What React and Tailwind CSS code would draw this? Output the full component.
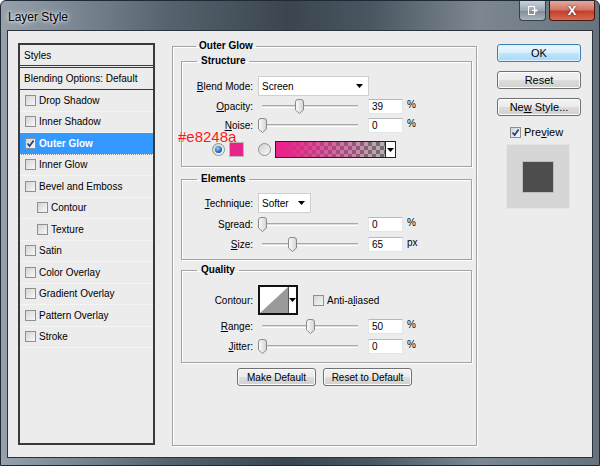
import React from "react";

const effects = [
  { name: "Drop Shadow" },
  { name: "Inner Shadow" },
  { name: "Outer Glow", on: true },
  { name: "Inner Glow" },
  { name: "Bevel and Emboss" },
  { name: "Contour", sub: true },
  { name: "Texture", sub: true },
  { name: "Satin" },
  { name: "Color Overlay" },
  { name: "Gradient Overlay" },
  { name: "Pattern Overlay" },
  { name: "Stroke" },
];

function Check({ checked }) {
  return (
    <span className="w-[11px] h-[11px] shrink-0 border border-[#8e8f8f] bg-[linear-gradient(135deg,#d4d4d4,#f8f8f8)] flex items-center justify-center">
      {checked && (
        <svg width="9" height="9" viewBox="0 0 9 9">
          <path d="M1.5 4.5 L3.6 7 L7.6 1.5" fill="none" stroke="#23448e" strokeWidth="1.8" />
        </svg>
      )}
    </span>
  );
}

function Radio({ on }) {
  return (
    <span className="w-[13px] h-[13px] shrink-0 rounded-full border border-[#8e8f8f] bg-[linear-gradient(135deg,#d0d0d0,#fafafa)] flex items-center justify-center">
      {on && (
        <span className="w-[7px] h-[7px] rounded-full bg-[radial-gradient(circle_at_40%_35%,#8fd4ff,#1a6bb8_60%,#0b3c70)]" />
      )}
    </span>
  );
}

function Arrow() {
  return (
    <svg width="7" height="4" viewBox="0 0 7 4">
      <path d="M0 0 H7 L3.5 4 Z" fill="#000" />
    </svg>
  );
}

function Select({ value, width }) {
  return (
    <div className={`h-[20px] ml-[5px] bg-white border border-[#cfcfcf] flex items-center pl-[3px] pr-[5px] justify-between ${width}`}>
      <span>{value}</span>
      <Arrow />
    </div>
  );
}

function Slider({ at }) {
  return (
    <div className="relative ml-[9px] w-[96px] h-[14px] flex items-center">
      <div className="w-full h-[3px] border-t border-[#a9a9a9] border-b border-b-white bg-[#dcdcdc]" />
      <svg
        className="absolute top-0"
        style={{ left: at - 4.5 }}
        width="9"
        height="15"
        viewBox="0 0 9 15"
      >
        <defs>
          <linearGradient id="th" x1="0" x2="1">
            <stop offset="0" stopColor="#fdfdfd" />
            <stop offset="1" stopColor="#d2d2d2" />
          </linearGradient>
        </defs>
        <path d="M0.5 3 Q0.5 0.5 3 0.5 H6 Q8.5 0.5 8.5 3 V11 L4.5 14.5 L0.5 11 Z" fill="url(#th)" stroke="#8a8a8a" />
      </svg>
    </div>
  );
}

function Field({ value }) {
  return (
    <div className="ml-[10px] w-[35px] h-[15px] bg-white border border-[#e2e6ea] border-t-[#b5b9bd] pl-[3px] leading-[13px]">
      {value}
    </div>
  );
}

function Label({ children, w = "w-[71px]" }) {
  return <span className={`${w} text-right shrink-0`}>{children}</span>;
}

function SliderRow({ label, at, value, unit, mt }) {
  return (
    <div className={`flex items-center h-[14px] ${mt}`}>
      <Label>{label}</Label>
      <Slider at={at} />
      <Field value={value} />
      <span className="ml-[4px] -mt-[3px]">{unit}</span>
    </div>
  );
}

function Btn({ children, w, primary }) {
  return (
    <div
      className={`h-[18px] rounded-[3px] flex items-center justify-center ${w} ${
        primary
          ? "border border-[#3c7fb1] bg-[linear-gradient(#eaf6fd_0%,#d9f0fc_50%,#bee6fd_51%,#a7d9f5_100%)] shadow-[inset_0_0_0_1px_#dff2fd]"
          : "border border-[#707070] bg-[linear-gradient(#f2f2f2_0%,#ebebeb_50%,#dddddd_51%,#cfcfcf_100%)] shadow-[inset_0_0_0_1px_#fcfcfc]"
      }`}
    >
      {children}
    </div>
  );
}

export default function App() {
  return (
    <div className="relative w-[600px] h-[466px] flex flex-col overflow-hidden rounded-t-[6px] border border-[#1f2a34] bg-[linear-gradient(90deg,#96a1ab_0%,#7b8792_12%,#56626d_28%,#3a4550_48%,#4a5661_62%,#7c8791_80%,#66727d_100%)] font-['Liberation_Sans',Arial,sans-serif] text-[10px] text-black">
      <div className="h-[29px] flex items-start shrink-0">
        <span className="mt-[9px] ml-[7px] text-[12px] leading-[14px] [text-shadow:0_0_6px_#fff,0_0_3px_#fff]">
          Layer Style
        </span>
        <div className="ml-auto flex gap-[3px] mr-[4px]">
          <div className="w-[27px] h-[20px] rounded-b-[4px] border border-t-0 border-[#34404b] bg-[linear-gradient(#c9d2da,#9aa6b1_50%,#7f8b96_51%,#a9b4bd)] flex items-center justify-center">
            <svg width="11" height="11" viewBox="0 0 11 11">
              <rect x="1.5" y="1.5" width="6" height="8" fill="none" stroke="#fff" />
              <path d="M5 5.5 H10 M8 3.5 L10 5.5 L8 7.5" fill="none" stroke="#fff" />
            </svg>
          </div>
          <div className="w-[46px] h-[20px] rounded-b-[4px] border border-t-0 border-[#4d1710] bg-[linear-gradient(#e6a89c,#d27866_45%,#c2402c_55%,#d76c52)] flex items-center justify-center">
            <span className="text-white font-bold text-[13px] leading-none [text-shadow:0_0_2px_#3a0a05]">X</span>
          </div>
        </div>
      </div>

      <div className="mx-[6px] mb-[7px] flex-1 border border-[#2a323a] bg-[#ececec] flex pl-[10px] pt-[9px]">
        <div className="mt-[3px] w-[137px] h-[402px] border-2 border-[#3a3a3a] flex flex-col">
          <div className="h-[23px] shrink-0 border-b-[3px] border-double border-[#3a3a3a] flex items-center pl-[4px]">
            Styles
          </div>
          <div className="h-[22px] shrink-0 border-b border-[#3a3a3a] flex items-center pl-[4px]">
            Blending Options: Default
          </div>
          {effects.map((e) => (
            <div
              key={e.name}
              className={`h-[21.5px] shrink-0 flex items-center border-b border-dotted border-[#fdfdfd] ${
                e.sub ? "pl-[17px]" : "pl-[5px]"
              } ${e.on ? "bg-[#3399ff] text-white font-bold" : ""}`}
            >
              <Check checked={e.on} />
              <span className="ml-[3px]">{e.name}</span>
            </div>
          ))}
        </div>

        <fieldset className="ml-[17px] w-[305px] h-[406px] border border-[#a3a3a3] pl-[8px] shadow-[1px_1px_0_#fff,inset_1px_1px_0_#fff]">
          <legend className="ml-[15px] px-[3px] font-bold leading-[12px]">Outer Glow</legend>

          <fieldset className="mt-[3px] w-[291px] border border-[#a3a3a3] pb-[8px] shadow-[1px_1px_0_#fff,inset_1px_1px_0_#fff]">
            <legend className="ml-[15px] px-[4px] font-bold leading-[12px]">Structure</legend>
            <div className="flex items-center h-[20px] mt-[9px]">
              <Label>
                <u>B</u>lend Mode:
              </Label>
              <Select value="Screen" width="w-[111px]" />
            </div>
            <SliderRow label={<><u>O</u>pacity:</>} at={37} value="39" unit="%" mt="mt-[3px]" />
            <SliderRow label={<><u>N</u>oise:</>} at={0} value="0" unit="%" mt="mt-[5px]" />
            <div className="flex items-center h-[17px] mt-[9px]">
              <span className="ml-[30px]">
                <Radio on />
              </span>
              <span className="ml-[4px] w-[15px] h-[15px] bg-[#e8248a] border border-[#b9b9b9]" />
              <span className="ml-[14px]">
                <Radio />
              </span>
              <div className="ml-[4px] w-[121px] h-[17px] border border-[#222] flex">
                <div className="flex-1 [background:linear-gradient(90deg,#e8248a_8%,rgba(232,36,138,0.55)_50%,rgba(232,36,138,0)),repeating-conic-gradient(#6f6f6f_0%_25%,#b4b4b4_0%_50%)_0_0/8px_8px]" />
                <div className="w-[10px] bg-white border-l border-[#222] flex items-center justify-center">
                  <Arrow />
                </div>
              </div>
            </div>
          </fieldset>

          <fieldset className="mt-[6px] w-[291px] border border-[#a3a3a3] pb-[8px] shadow-[1px_1px_0_#fff,inset_1px_1px_0_#fff]">
            <legend className="ml-[15px] px-[4px] font-bold leading-[12px]">Elements</legend>
            <div className="flex items-center h-[20px] mt-[8px]">
              <Label>
                <u>T</u>echnique:
              </Label>
              <Select value="Softer" width="w-[53px]" />
            </div>
            <SliderRow label={<>S<u>p</u>read:</>} at={0} value="0" unit="%" mt="mt-[4px]" />
            <SliderRow label={<><u>S</u>ize:</>} at={30} value="65" unit="px" mt="mt-[6px]" />
          </fieldset>

          <fieldset className="mt-[4px] w-[291px] border border-[#a3a3a3] pb-[9px] shadow-[1px_1px_0_#fff,inset_1px_1px_0_#fff]">
            <legend className="ml-[15px] px-[4px] font-bold leading-[12px]">Quality</legend>
            <div className="flex items-center h-[30px] mt-[9px]">
              <Label>Contour:</Label>
              <div className="ml-[5px] w-[40px] h-[30px] border-2 border-[#111] bg-white flex">
                <svg width="28" height="26" viewBox="0 0 28 26">
                  <polygon points="0,26 28,0 28,26" fill="#9a9a9a" />
                </svg>
                <div className="flex-1 border-l border-[#555] flex items-center justify-center">
                  <Arrow />
                </div>
              </div>
              <span className="ml-[15px]">
                <Check />
              </span>
              <span className="ml-[3px]">
                Anti-a<u>l</u>iased
              </span>
            </div>
            <SliderRow label={<><u>R</u>ange:</>} at={48} value="50" unit="%" mt="mt-[4px]" />
            <SliderRow label={<><u>J</u>itter:</>} at={0} value="0" unit="%" mt="mt-[6px]" />
          </fieldset>

          <div className="-ml-[8px] w-[303px] mt-[5px] flex justify-center gap-[7px]">
            <Btn w="w-[79px]">Make Default</Btn>
            <Btn w="w-[89px]">Reset to Default</Btn>
          </div>
        </fieldset>

        <div className="ml-[20px] mt-[4px] w-[84px] flex flex-col">
          <Btn w="w-[84px]" primary>
            <span className="text-[11px]">OK</span>
          </Btn>
          <div className="mt-[9px]">
            <Btn w="w-[84px]">
              <span className="text-[11px]">Reset</span>
            </Btn>
          </div>
          <div className="mt-[9px]">
            <Btn w="w-[84px]">
              <span className="text-[11px]">
                Ne<u>w</u> Style...
              </span>
            </Btn>
          </div>
          <div className="mt-[11px] ml-[13px] h-[11px] flex items-center">
            <Check checked />
            <span className="ml-[3px] text-[11px]">
              Pre<u>v</u>iew
            </span>
          </div>
          <div className="mt-[6px] ml-[9px] w-[64px] h-[65px] bg-[#d6d6d6] border border-[#e4e4e4] flex items-center justify-center">
            <div className="w-[32px] h-[32px] bg-[#4d4d4d] border border-[#bdbdbd]" />
          </div>
        </div>
      </div>

      <span className="absolute left-[177px] top-[128px] text-[15px] leading-[15px] text-[#ff1a1a]">#e8248a</span>
    </div>
  );
}
